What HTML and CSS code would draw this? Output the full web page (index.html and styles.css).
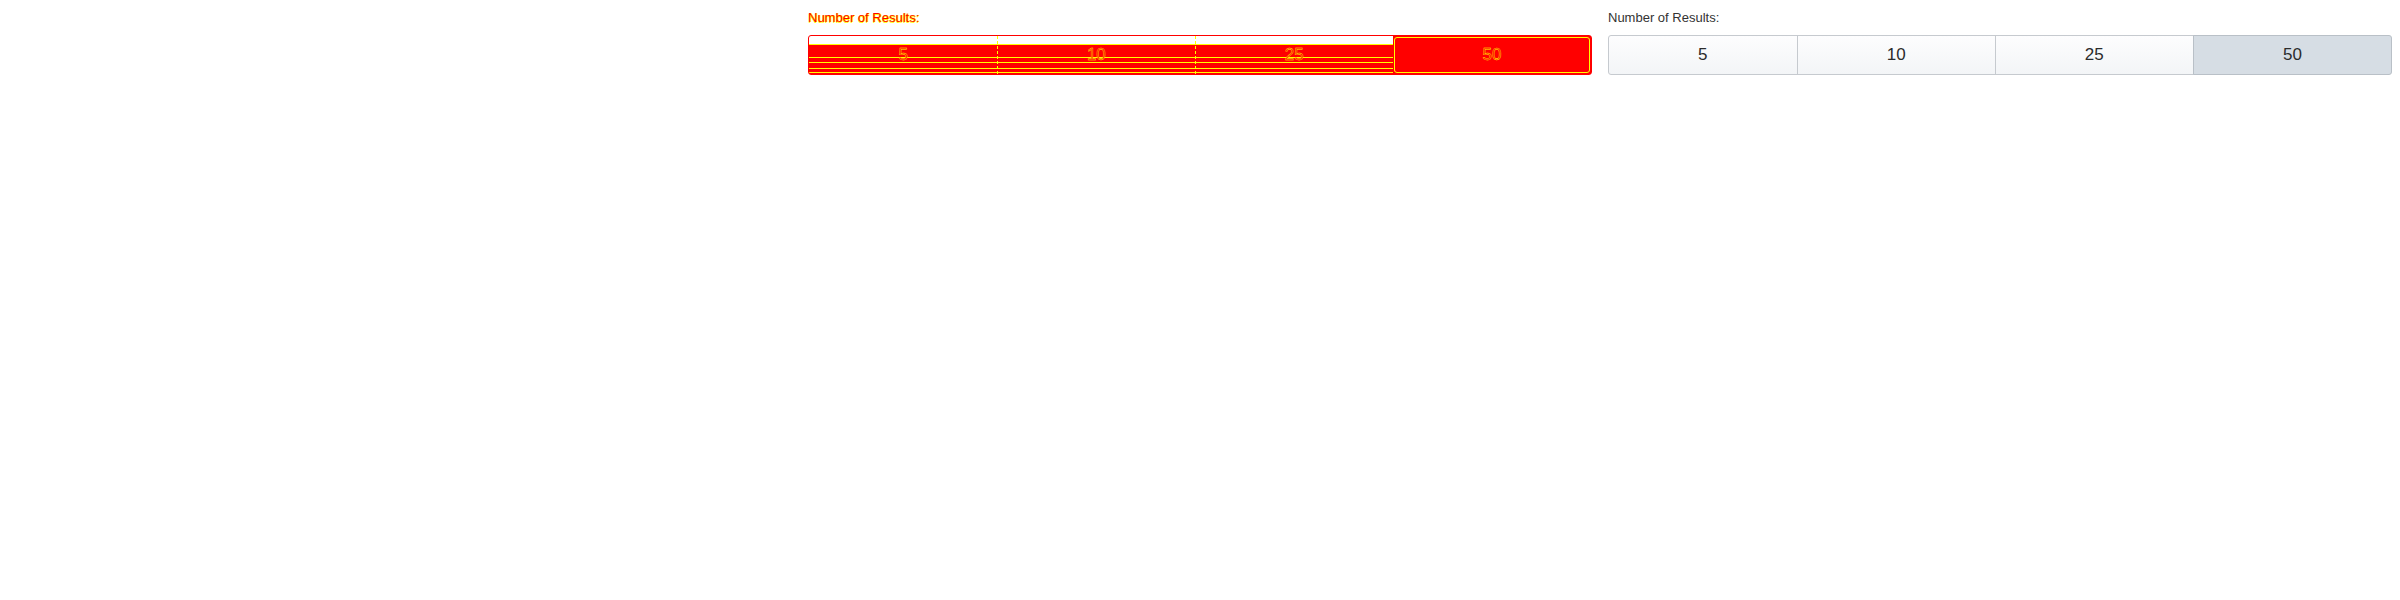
FILE: index.html
```html
<!DOCTYPE html>
<html>
<head>
<meta charset="utf-8">
<link rel="stylesheet" href="styles.css">
</head>
<body>
<div class="grid">
  <div class="col"></div>
  <div class="col">
    <div class="label diff-label">Number of Results:</div>
    <div class="diff-group">
      <div class="dcell">5</div>
      <div class="dcell">10</div>
      <div class="dcell">25</div>
      <div class="dcell dactive">50</div>
    </div>
  </div>
  <div class="col">
    <div class="label">Number of Results:</div>
    <div class="btn-group">
      <button class="btn">5</button>
      <button class="btn">10</button>
      <button class="btn">25</button>
      <button class="btn active">50</button>
    </div>
  </div>
</div>
</body>
</html>
```
FILE: styles.css
```css
html, body {
  margin: 0;
  padding: 0;
  background: #ffffff;
}

.grid {
  display: grid;
  grid-template-columns: 800px 800px 800px;
  font-family: "Liberation Sans", Arial, sans-serif;
}

.col {
  padding: 8px;
}

.label {
  font-size: 13px;
  line-height: 19px;
  color: #333333;
  margin-bottom: 8px;
}

.btn-group {
  display: flex;
  height: 40px;
}

.btn {
  flex: 1 1 auto;
  height: 40px;
  margin: 0;
  margin-left: -1px;
  padding: 0 12px;
  border: 1px solid #c6cacf;
  border-radius: 0;
  background: linear-gradient(to bottom, #fdfdfe, #f3f5f7);
  font-family: "Liberation Sans", Arial, sans-serif;
  font-size: 17px;
  color: #2b2b2b;
}

.btn:first-child {
  margin-left: 0;
  border-radius: 3px 0 0 3px;
}

.btn:last-child {
  border-radius: 0 3px 3px 0;
}

.btn.active {
  background: #d6dde4;
  border-color: #b9c0c7;
}

/* diff visualisation */
.diff-label {
  color: #ff0000;
  text-shadow: 0 1px 0 #ffff00, 1px 0 0 #ffff00;
}

.diff-group {
  display: flex;
  height: 40px;
  box-sizing: border-box;
  border: 1px solid #ff0000;
  border-radius: 3px;
  background: linear-gradient(to bottom,
    #ffffff 0px, #ffffff 8px,
    #ffff00 8px, #ffff00 9px,
    #ff0000 9px, #ff0000 21px,
    #ffff00 21px, #ffff00 22px,
    #ff0000 22px, #ff0000 26px,
    #ffff00 26px, #ffff00 27px,
    #ff0000 27px, #ff0000 32px,
    #ffff00 32px, #ffff00 33px,
    #ff0000 33px, #ff0000 36px,
    #ffff00 36px, #ffff00 37px,
    #ff0000 37px);
}

.dcell {
  flex: 1 1 auto;
  padding: 0 12px;
  margin-left: -1px;
  display: flex;
  align-items: center;
  justify-content: center;
  font-size: 17px;
  color: #ff0000;
  -webkit-text-stroke: 0.4px #ffff00;
  border-right: 1px dashed #ffff00;
}

.dcell:first-child {
  margin-left: 0;
}

.dactive {
  position: relative;
  background: #ff0000;
  border-right: 0;
}

.dactive::after {
  content: "";
  position: absolute;
  inset: 1px;
  border: 1px solid #ffff00;
  border-radius: 3px;
}
```
